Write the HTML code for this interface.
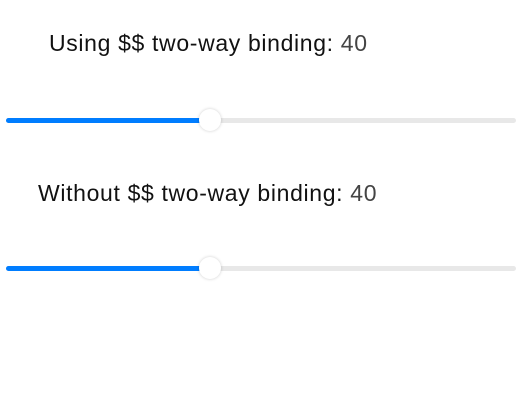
<!DOCTYPE html>
<html><head><style>
body{margin:0;width:528px;height:401px;background:#fff;font-family:"Liberation Sans",sans-serif;position:relative;overflow:hidden}
.t{position:absolute;font-size:23px;color:#111;white-space:nowrap;letter-spacing:0.65px}
.t span{color:#444}
.track{position:absolute;left:6px;width:510px;height:5px;border-radius:3px;background:#e8e8e8}
.fill{position:absolute;left:0;top:0;height:5px;width:204px;border-radius:3px;background:#007dff}
.thumb{position:absolute;width:22px;height:22px;border-radius:50%;background:#fff;box-shadow:0 0 3px rgba(0,0,0,.2)}
</style></head><body>
<div class="t" style="left:49px;top:30px">Using $$ two-way binding: <span>40</span></div>
<div class="track" style="top:118px"><div class="fill"></div></div>
<div class="thumb" style="left:199px;top:109px"></div>
<div class="t" style="left:38px;top:180px">Without $$ two-way binding: <span>40</span></div>
<div class="track" style="top:266px"><div class="fill"></div></div>
<div class="thumb" style="left:199px;top:257px"></div>
</body></html>
